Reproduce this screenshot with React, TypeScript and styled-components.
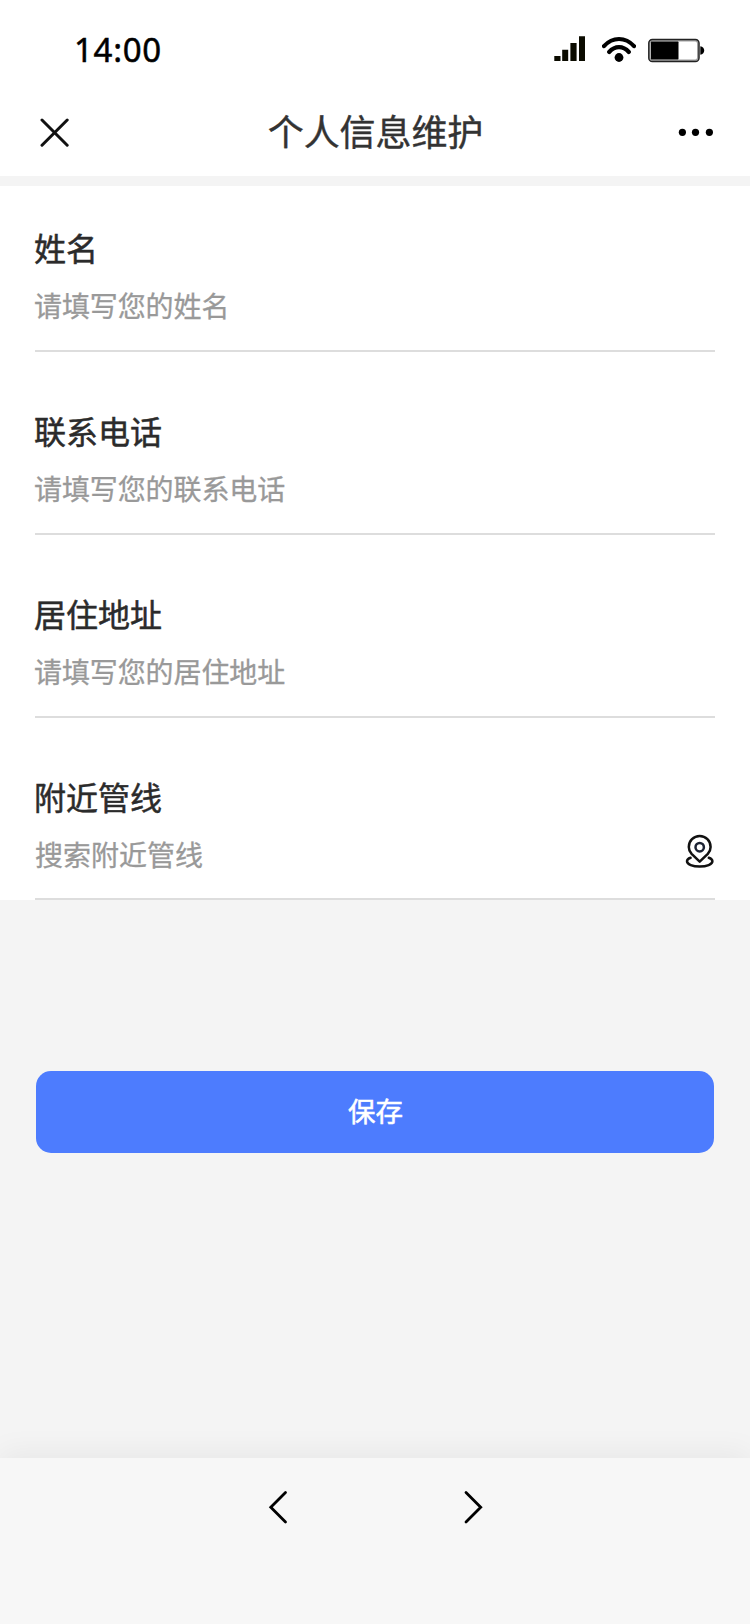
import React from "react";
import styled, { createGlobalStyle } from "styled-components";

const Global = createGlobalStyle`
  * { box-sizing: border-box; }
  body { margin: 0; background: #f4f4f4; }
`;
const cjk = `"Noto Sans CJK SC", sans-serif`;

const Page = styled.div`
  display: flex;
  flex-direction: column;
  width: 750px;
  height: 1624px;
  background: #f4f4f4;
  overflow: hidden;
`;
const Header = styled.header`
  flex: none;
  height: 176px;
  background: #fff;
`;
const StatusBar = styled.div`
  display: flex;
  align-items: flex-start;
  justify-content: space-between;
  height: 88px;
  padding: 29px 45px 0 74px;
`;
const Time = styled.span`
  margin-top: 1px;
  font: 400 33px/40px "Noto Sans", sans-serif;
  letter-spacing: 0.7px;
  color: #000;
  -webkit-text-stroke: 0.5px #000;
`;
const StatusIcons = styled.div`
  display: flex;
  gap: 12px;
  padding-top: 5px;
`;
const NavBar = styled.div`
  display: grid;
  grid-template-columns: 1fr auto 1fr;
  align-items: center;
  height: 88px;
  padding: 0 39px 0 40px;
`;
const IconButton = styled.button<{ $end?: boolean }>`
  display: flex;
  justify-self: ${(p) => (p.$end ? "end" : "start")};
  padding: 0;
  border: 0;
  background: none;
`;
const Title = styled.h1`
  margin: 0 0 4px;
  font: 400 36px/50px ${cjk};
  letter-spacing: -0.1px;
  color: #333;
  -webkit-text-stroke: 0.4px #333;
`;
const Form = styled.main`
  flex: none;
  margin-top: 10px;
  padding: 0 35px;
  background: #fff;
`;
const Field = styled.label<{ $height: number; $top: number }>`
  display: flex;
  flex-direction: column;
  height: ${(p) => p.$height}px;
  padding-top: ${(p) => p.$top}px;
  border-bottom: 2px solid #ddd;
`;
const Label = styled.span`
  margin-left: -1px;
  font: 400 32px/46px ${cjk};
  color: #2b2b2b;
  -webkit-text-stroke: 0.5px #2b2b2b;
`;
const InputRow = styled.span`
  display: flex;
  justify-content: space-between;
  height: 40px;
  margin-top: 15px;
`;
const Placeholder = styled.span<{ $shift?: boolean }>`
  margin-left: ${(p) => (p.$shift ? 0 : -1)}px;
  font: 400 28px/40px ${cjk};
  letter-spacing: ${(p) => (p.$shift ? 0 : -0.1)}px;
  color: #999;
  -webkit-text-stroke: 0.3px #999;
`;
const SaveButton = styled.button`
  flex: none;
  height: 82px;
  margin: 171px 36px 0;
  padding: 0 0 5px 1px;
  border: 0;
  border-radius: 15px;
  background: #4d7cfe;
  color: #fff;
  font: 400 27.5px/40px ${cjk};
  -webkit-text-stroke: 0.5px #fff;
`;
const Footer = styled.footer`
  display: flex;
  justify-content: center;
  gap: 176px;
  height: 166px;
  margin-top: auto;
  padding: 31px 0 0 1px;
  background: #f7f7f7;
  box-shadow: 0 -4px 30px rgba(0, 0, 0, 0.06);
`;

const SignalIcon = () => (
  <svg width="32" height="28" viewBox="0 0 32 28" fill="#0b0b00">
    <path d="M0.3 22h6.2v5H.3zM8.2 15.8h6v11.2h-6zM16.4 9h6.2v18h-6.2zM25 2.2h6V27h-6z" />
  </svg>
);
const WifiIcon = () => (
  <svg width="34" height="29" viewBox="0 0 34 29" fill="none" stroke="#000" strokeWidth="4.2" strokeLinecap="round">
    <path d="M2 12.1Q8.5 5 17 5T32 12.1M7.2 18Q11.5 13.2 17 13.2T26.8 18" />
    <circle cx="17" cy="23.5" r="4.4" fill="#000" stroke="none" />
  </svg>
);
const Signals = styled.div`
  display: flex;
  gap: 16px;
`;
const BatteryIcon = () => (
  <svg width="57" height="29" viewBox="0 0 57 29">
    <rect x="1.6" y="6.3" width="48.6" height="20.4" rx="3" fill="none" stroke="#a0a0a0" strokeWidth="2.4" />
    <rect x="0.8" y="5.5" width="50.2" height="22" rx="3.6" fill="none" stroke="#222" strokeWidth="1.4" />
    <rect x="3" y="7.6" width="27.5" height="17.8" rx="0.6" />
    <path d="M52.3 12.2q3.9.7 3.9 4.3t-3.9 4.3z" />
  </svg>
);
const CloseIcon = () => (
  <svg width="29" height="29" viewBox="0 0 29 29" stroke="#111" strokeWidth="3" strokeLinecap="round">
    <path d="M2 2l25.2 25.2M27.2 2L2 27.2" />
  </svg>
);
const MoreIcon = () => (
  <svg width="36" height="10" viewBox="0 0 36 10">
    <circle cx="5.4" cy="5.3" r="3.6" />
    <circle cx="18.5" cy="5.3" r="3.6" />
    <circle cx="32.4" cy="5.3" r="3.6" />
  </svg>
);
const MoreButton = styled(IconButton)`
  margin-right: -2px;
`;
const PinIcon = () => (
  <svg width="30" height="34" viewBox="0 0 30 34" fill="none" stroke="#111" strokeWidth="2.5" strokeLinecap="round" strokeLinejoin="round">
    <path d="M14.7 27.6L6.6 19.8C4.9 18 3.8 15.6 3.8 12.9a10.9 10.9 0 0 1 21.8 0c0 2.7-1.1 5.1-2.8 6.9z" />
    <circle cx="14.7" cy="13.2" r="4.2" stroke="#1b2233" />
    <path d="M5.6 23.8C3.4 24.5 2 25.8 2 27.3c0 3.1 5.7 5.2 12.7 5.2s12.7-2.1 12.7-5.2c0-1.5-1.4-2.8-3.6-3.5" />
  </svg>
);
const Chevron = ({ right }: { right?: boolean }) => (
  <svg width="20" height="36" viewBox="0 0 20 36" fill="none" stroke="#000" strokeWidth="2.8" strokeLinecap="round">
    <path d={right ? "M2 3.6L16.7 18.3 2 33" : "M17.5 3.6L2.8 18.3 17.5 33"} />
  </svg>
);

const fields = [
  { label: "姓名", hint: "请填写您的姓名", height: 166, top: 38 },
  { label: "联系电话", hint: "请填写您的联系电话", height: 183, top: 55 },
  { label: "居住地址", hint: "请填写您的居住地址", height: 183, top: 55 },
  { label: "附近管线", hint: "搜索附近管线", height: 182, top: 55, pin: true },
];

export default function App() {
  return (
    <Page>
      <Global />
      <Header>
        <StatusBar>
          <Time>14:00</Time>
          <StatusIcons>
            <Signals>
              <SignalIcon />
              <WifiIcon />
            </Signals>
            <BatteryIcon />
          </StatusIcons>
        </StatusBar>
        <NavBar>
          <IconButton aria-label="关闭"><CloseIcon /></IconButton>
          <Title>个人信息维护</Title>
          <MoreButton $end aria-label="更多"><MoreIcon /></MoreButton>
        </NavBar>
      </Header>
      <Form>
        {fields.map((f) => (
          <Field key={f.label} $height={f.height} $top={f.top}>
            <Label>{f.label}</Label>
            <InputRow>
              <Placeholder $shift={f.pin}>{f.hint}</Placeholder>
              {f.pin && <PinIcon />}
            </InputRow>
          </Field>
        ))}
      </Form>
      <SaveButton>保存</SaveButton>
      <Footer>
        <IconButton aria-label="后退"><Chevron /></IconButton>
        <IconButton aria-label="前进"><Chevron right /></IconButton>
      </Footer>
    </Page>
  );
}
